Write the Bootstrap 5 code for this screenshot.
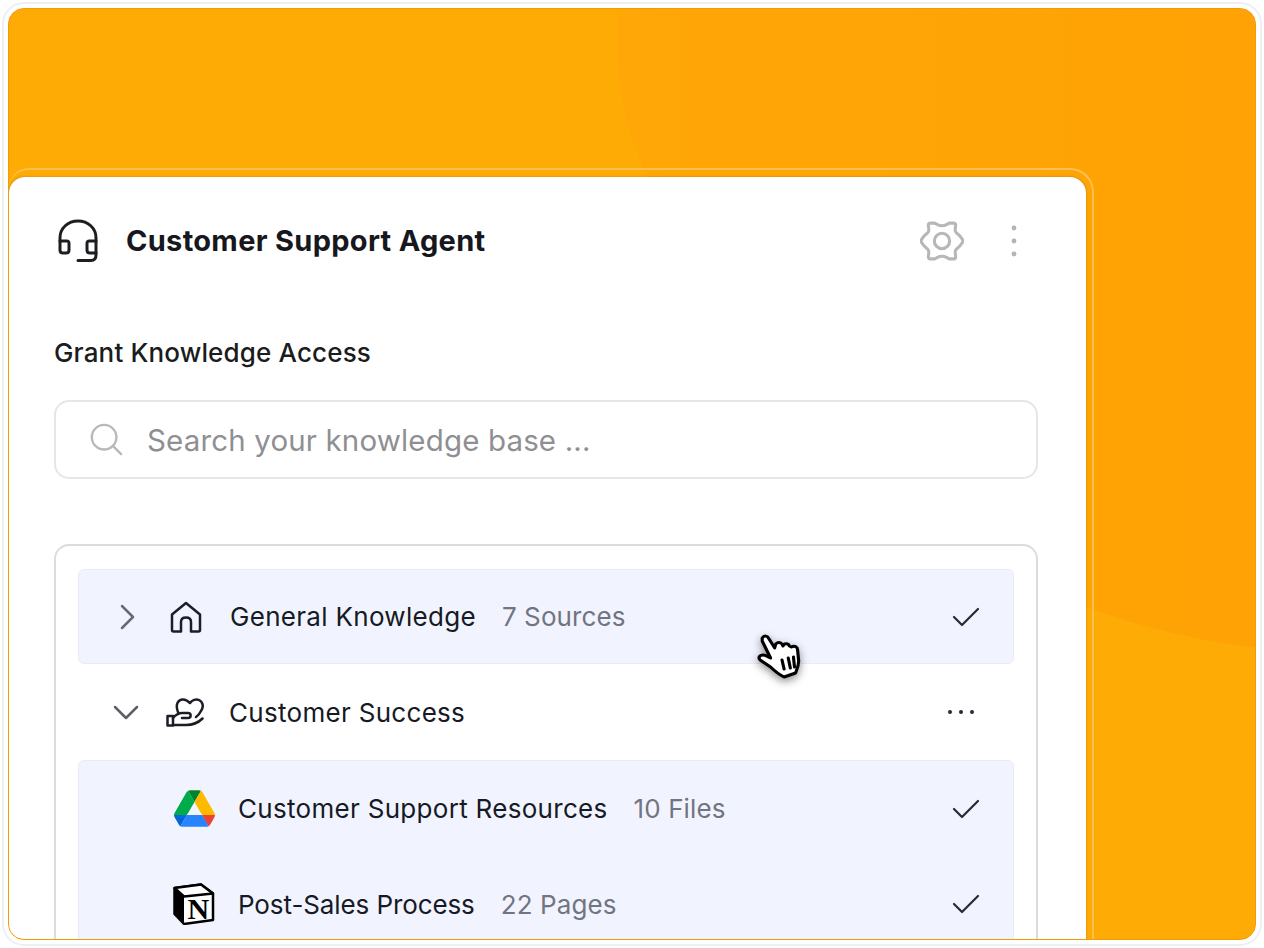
<!DOCTYPE html>
<html lang="en">
<head>
  <meta charset="UTF-8">
  <meta name="viewport" content="width=device-width, initial-scale=1">
  <title>Customer Support Agent</title>
  <link href="https://cdn.jsdelivr.net/npm/bootstrap@5.3.3/dist/css/bootstrap.min.css" rel="stylesheet">
  <style>
    html, body { height: 100%; background: #fff; overflow: hidden; }
    body { font-family: "Inter", "Liberation Sans", sans-serif; color: #161a24; }
    .frame-ring { height: 944px; margin: 2px; padding: 4px; border: 2px solid #efefef; border-radius: 22px; }
    .orange-panel { height: 932px; background: #ffab05; border: 1px solid #f09c08; border-radius: 16px; overflow: hidden; padding-top: 159px; }
    .panel-curves { left: 0; top: 0; }
    .halo { width: 1085px; height: 790px; padding: 7px 6px 0 0; border: 2px solid #ffc04d; border-left: 0; border-bottom: 0; border-top-right-radius: 24px; border-top-left-radius: 20px; }
    .agent-card { height: 100%; background: #fff; border-top-right-radius: 16px; border-top-left-radius: 16px; padding: 0 48px 0 45px; overflow: hidden; box-shadow: 0 0 2px rgba(60,60,60,.45); }
    .card-head { height: 124px; padding-top: 4px; }
    .head-mark { margin-left: 4px; }
    .agent-title { font-size: 29px; font-weight: 700; letter-spacing: .3px; margin-left: 28px; color: #16181d; }
    .head-gear { margin-left: auto; margin-right: 46px; }
    .head-dots { margin-right: 20px; }
    .grant-label { font-size: 26px; font-weight: 500; letter-spacing: .15px; color: #1a1c20; line-height: 34px; margin: 35px 0 30px; }
    .search-box { height: 79px; border: 2px solid #e6e6e6; border-radius: 15px; padding-left: 33px; margin-bottom: 65px; }
    .search-hint { font-size: 29.500px; letter-spacing: .15px; color: #8f8f93; margin-left: 24px; padding-top: 2px; }
    .kb-box { height: 500px; border: 2px solid #dcdcdc; border-radius: 15px; padding: 23px 22px 0; }
    .kb-row { height: 96px; padding-right: 33px; font-size: 26px; letter-spacing: .3px; }
    .kb-picked { background: #f1f4ff; border: 1px solid #e8ebf9; border-radius: 6px; }
    .kb-first { height: 95px; }
    .kb-chevron { width: 30px; margin-left: 33px; }
    .kb-icon { width: 44px; margin-left: 22px; margin-right: 22px; }
    .kb-file-icon { width: 44px; margin-left: 93px; margin-right: 22px; }
    .kb-tight { letter-spacing: -.1px; }
    .kb-count { color: #71757f; margin-left: 26px; letter-spacing: .1px; }
    .kb-end { margin-left: auto; }
    .kb-more { margin-right: 6px; }
    .hand-cursor { left: 748px; top: 624px; filter: drop-shadow(0 3px 4px rgba(0,0,0,.45)); }
  </style>
</head>
<body>
  <div class="frame-ring">
    <div class="orange-panel position-relative">
      <svg class="panel-curves position-absolute" width="1248" height="932" viewBox="0 0 1248 932">
        <defs>
          <linearGradient id="curveFill" x1="0" y1="0" x2="1" y2="0">
            <stop offset="0" stop-color="#ffa706"/>
            <stop offset="1" stop-color="#ffa205"/>
          </linearGradient>
        </defs>
        <path d="M608 0C606 70 614 120 640 170C700 280 850 590 1248 639V0Z" fill="url(#curveFill)"/>
      </svg>

      <div class="halo position-relative">
        <div class="agent-card">
          <div class="card-head d-flex align-items-center">
            <svg class="head-mark" width="40" height="44" viewBox="0 0 40 44" fill="none" stroke="#1c1e22" stroke-width="3" stroke-linecap="round" stroke-linejoin="round">
              <path d="M2 22V19C2 9 10 2 20 2S38 9 38 19V36C38 40 36 41.500 33 41.500H20"/>
              <path d="M2 22H9C10 22 11 23 11 24V31C11 33 10 34 8 34H5C3 34 2 33 2 31Z"/>
              <path d="M38 22H31C30 22 29 23 29 24V31C29 33 30 34 32 34H38"/>
            </svg>
            <span class="agent-title">Customer Support Agent</span>
            <svg class="head-gear" width="44" height="40" viewBox="0 0 43 39" fill="none" stroke="#b7b7b7" stroke-width="3" stroke-linejoin="round">
              <path d="M10 2H14C15 2 16 3 17 3.500C20 5 23 5 26 3.500C27 3 28 2 29 2H33C34.500 2 35 3 34.800 5C34.500 8 33.500 10 35.500 11.500C37.500 13 40 15.500 41.500 18C42 19 42 20 41.500 21C40 23.500 37.500 26 35.500 27.500C33.500 29 34.500 31 34.800 34C35 36 34.500 37 33 37H29C28 37 27 36 26 35.500C23 34 20 34 17 35.500C16 36 15 37 14 37H10C8.500 37 8 36 8.200 34C8.500 31 9.500 29 7.500 27.500C5.500 26 3 23.500 1.500 21C1 20 1 19 1.500 18C3 15.500 5.500 13 7.500 11.500C9.500 10 8.500 8 8.200 5C8 3 8.500 2 10 2Z"/>
              <circle cx="21.500" cy="19.500" r="7.500"/>
            </svg>
            <svg class="head-dots" width="8" height="34" viewBox="0 0 8 34" fill="#b4b4b4">
              <circle cx="4" cy="4" r="2.400"/><circle cx="4" cy="17" r="2.400"/><circle cx="4" cy="30" r="2.400"/>
            </svg>
          </div>

          <div class="grant-label">Grant Knowledge Access</div>

          <div class="search-box d-flex align-items-center">
            <svg width="34" height="34" viewBox="0 0 36 36" fill="none" stroke="#b9b9b9" stroke-width="2.500" stroke-linecap="round">
              <circle cx="16" cy="15" r="13"/><path d="M26 25L34 33"/>
            </svg>
            <span class="search-hint">Search your knowledge base ...</span>
          </div>

          <div class="kb-box">
            <div class="kb-row kb-first kb-picked d-flex align-items-center">
              <span class="kb-chevron d-flex justify-content-center">
                <svg width="16" height="26" viewBox="0 0 16 26" fill="none" stroke="#666a73" stroke-width="2.500" stroke-linecap="round" stroke-linejoin="round"><path d="M3 2L14 13L3 24"/></svg>
              </span>
              <span class="kb-icon d-flex justify-content-center">
                <svg width="32" height="32" viewBox="0 0 32 32" fill="none" stroke="#1c1e26" stroke-width="2.500" stroke-linecap="round" stroke-linejoin="round">
                  <path d="M2 13.500L16 2L30 13.500V29C30 30 29.500 30.500 28.500 30.500H21V21C21 18 19 16.500 16 16.500S11 18 11 21V30.500H3.500C2.500 30.500 2 30 2 29Z"/>
                </svg>
              </span>
              <span>General Knowledge</span>
              <span class="kb-count">7 Sources</span>
              <svg class="kb-end" width="28" height="22" viewBox="0 0 28 22" fill="none" stroke="#262a34" stroke-width="2.200" stroke-linecap="round" stroke-linejoin="round"><path d="M2 11L10 19L26 3"/></svg>
            </div>

            <div class="kb-row d-flex align-items-center">
              <span class="kb-chevron d-flex justify-content-center">
                <svg width="26" height="16" viewBox="0 0 26 16" fill="none" stroke="#5c5f66" stroke-width="2.500" stroke-linecap="round" stroke-linejoin="round"><path d="M2 3L13 14L24 3"/></svg>
              </span>
              <span class="kb-icon d-flex justify-content-center">
                <svg width="38" height="29" viewBox="0 0 38 29" fill="none" stroke="#1c1e26" stroke-width="2.500" stroke-linecap="round" stroke-linejoin="round">
                  <path d="M12 14C10 9 10 3 16 1.500C19 1 22 3 24 5C26 2 30 .5 33 2C37 4 38 9 35 13C34 15 33 17 30 19"/>
                  <path d="M1.500 18H7V27.500H1.500Z"/>
                  <path d="M7 20C10 16 14 14.500 18 15H22C25.500 15 25.500 20 22 20H16"/>
                  <path d="M7 27H20C27 27 32 25 36.500 20.500"/>
                </svg>
              </span>
              <span>Customer Success</span>
              <svg class="kb-end kb-more" width="28" height="6" viewBox="0 0 28 6" fill="#262a34"><circle cx="3" cy="3" r="2"/><circle cx="14" cy="3" r="2"/><circle cx="25" cy="3" r="2"/></svg>
            </div>

            <div class="kb-picked">
              <div class="kb-row kb-first d-flex align-items-center">
                <span class="kb-file-icon d-flex justify-content-center">
                  <svg width="41" height="37" viewBox="0 0 87.300 78">
                    <path d="m6.600 66.850 3.850 6.650c.8 1.400 1.950 2.500 3.300 3.300l13.750-23.800h-27.500c0 1.550.4 3.100 1.200 4.500z" fill="#0066da"/>
                    <path d="m43.650 25-13.750-23.800c-1.350.8-2.500 1.900-3.300 3.300l-25.400 44a9.060 9.060 0 0 0 -1.200 4.500h27.500z" fill="#00ac47"/>
                    <path d="m73.550 76.800c1.350-.8 2.500-1.900 3.300-3.300l1.600-2.750 7.650-13.250c.8-1.400 1.200-2.950 1.200-4.500h-27.502l5.852 11.500z" fill="#ea4335"/>
                    <path d="m43.650 25 13.750-23.800c-1.350-.8-2.900-1.200-4.500-1.200h-18.500c-1.600 0-3.150.45-4.500 1.200z" fill="#00832d"/>
                    <path d="m59.800 53h-32.300l-13.750 23.800c1.350.8 2.900 1.200 4.500 1.200h50.800c1.600 0 3.150-.45 4.500-1.200z" fill="#2684fc"/>
                    <path d="m73.400 26.500-12.700-22c-.8-1.400-1.950-2.500-3.300-3.300l-13.750 23.800 16.150 28h27.450c0-1.550-.4-3.100-1.200-4.500z" fill="#ffba00"/>
                  </svg>
                </span>
                <span>Customer Support Resources</span>
                <span class="kb-count">10 Files</span>
                <svg class="kb-end" width="28" height="22" viewBox="0 0 28 22" fill="none" stroke="#262a34" stroke-width="2.200" stroke-linecap="round" stroke-linejoin="round"><path d="M2 11L10 19L26 3"/></svg>
              </div>
              <div class="kb-row d-flex align-items-center">
                <span class="kb-file-icon d-flex justify-content-center">
                  <svg width="42" height="42" viewBox="0 0 42 42">
                    <path d="M1.500 5L28 1.500L40 10.500V37L11 41L1.500 31Z" fill="#fff" stroke="#000" stroke-width="2.500" stroke-linejoin="round"/>
                    <path d="M1.500 5L11 13.500L40 10.500L28 1.500Z" fill="#fff" stroke="#000" stroke-width="2.500" stroke-linejoin="round"/>
                    <path d="M1.500 5L11 13.500V41L1.500 31Z" fill="#000"/>
                    <text x="25.500" y="36" text-anchor="middle" font-family="Liberation Serif" font-weight="700" font-size="30" fill="#000">N</text>
                  </svg>
                </span>
                <span class="kb-tight">Post-Sales Process</span>
                <span class="kb-count">22 Pages</span>
                <svg class="kb-end" width="28" height="22" viewBox="0 0 28 22" fill="none" stroke="#262a34" stroke-width="2.200" stroke-linecap="round" stroke-linejoin="round"><path d="M2 11L10 19L26 3"/></svg>
              </div>
              <div class="kb-row"></div>
            </div>
          </div>
        </div>
      </div>

      <svg class="hand-cursor position-absolute" width="50" height="46" viewBox="0 0 48 46" fill="#fff" stroke="#000" stroke-width="3" stroke-linejoin="round" stroke-linecap="round" preserveAspectRatio="none">
        <path d="M5 5C7 2 10 3 11 5L17 15L18 11C20 9 22 9 24 11L25 13C26 10 30 10 31 13L33 14C36 12 39 14 39 17L40 28C40 33 38 37 37 40L26 44C22 42 16 37 13 34L3 27C1 25 2 22 6 22C8 22 11 24 13 25L5 8Z"/>
        <path d="M24 27L26 36M30 25L32 35M35 24L36 34" fill="none"/>
      </svg>
    </div>
  </div>
</body>
</html>
